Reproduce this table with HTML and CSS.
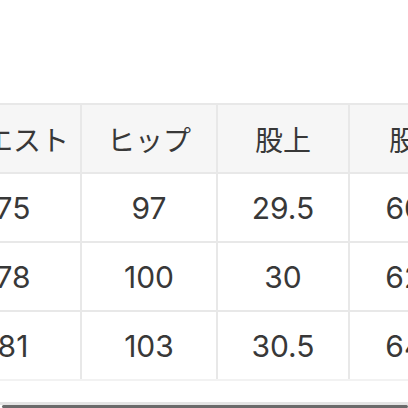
FILE: index.html
```html
<!DOCTYPE html>
<html lang="ja">
<head>
<meta charset="utf-8">
<link rel="stylesheet" href="styles.css">
</head>
<body>
<div class="page">
  <div class="spacer"></div>
  <table class="size">
    <colgroup>
      <col class="c1"><col class="c2"><col class="c3"><col class="c4">
    </colgroup>
    <thead>
      <tr><th>ウエスト</th><th>ヒップ</th><th>股上</th><th>股下</th></tr>
    </thead>
    <tbody>
      <tr><td>75</td><td>97</td><td>29.5</td><td>60.5</td></tr>
      <tr><td>78</td><td>100</td><td>30</td><td>62.5</td></tr>
      <tr><td>81</td><td>103</td><td>30.5</td><td>64.5</td></tr>
    </tbody>
  </table>
  <div class="scroll"><div class="track"></div><div class="thumb"></div></div>
</div>
</body>
</html>
```
FILE: styles.css
```css
html, body { margin: 0; padding: 0; background: #fff; }
.page {
  width: 408px;
  height: 408px;
  overflow: hidden;
  position: relative;
  font-family: "Noto Sans CJK JP", "Noto Sans", sans-serif;
  color: #383838;
}
.spacer { height: 103px; }
.size {
  border-collapse: collapse;
  margin-left: -56px;
  table-layout: fixed;
  width: 540px;
}
.c1 { width: 136px; }
.c2 { width: 136px; }
.c3 { width: 132px; }
.c4 { width: 136px; }
.size th, .size td {
  height: 67px;
  padding: 0;
  text-align: center;
  vertical-align: middle;
  border: 2px solid #e8e8e8;
  font-weight: normal;
  line-height: 1;
  white-space: nowrap;
}
.size th { background: #f6f6f6; font-size: 28px; }
.size td { font-family: Inter, "Noto Sans CJK JP", sans-serif; font-size: 30px; }
.size tbody tr:last-child td { border-bottom-color: #f2f2f2; }
.scroll {
  position: absolute;
  left: 0;
  right: 0;
  bottom: 0;
  height: 6px;
}
.track { height: 3px; background: #e4e4e4; }
.thumb { height: 3px; background: #6a6a6a; border-radius: 2px; margin-left: 2px; }
```
